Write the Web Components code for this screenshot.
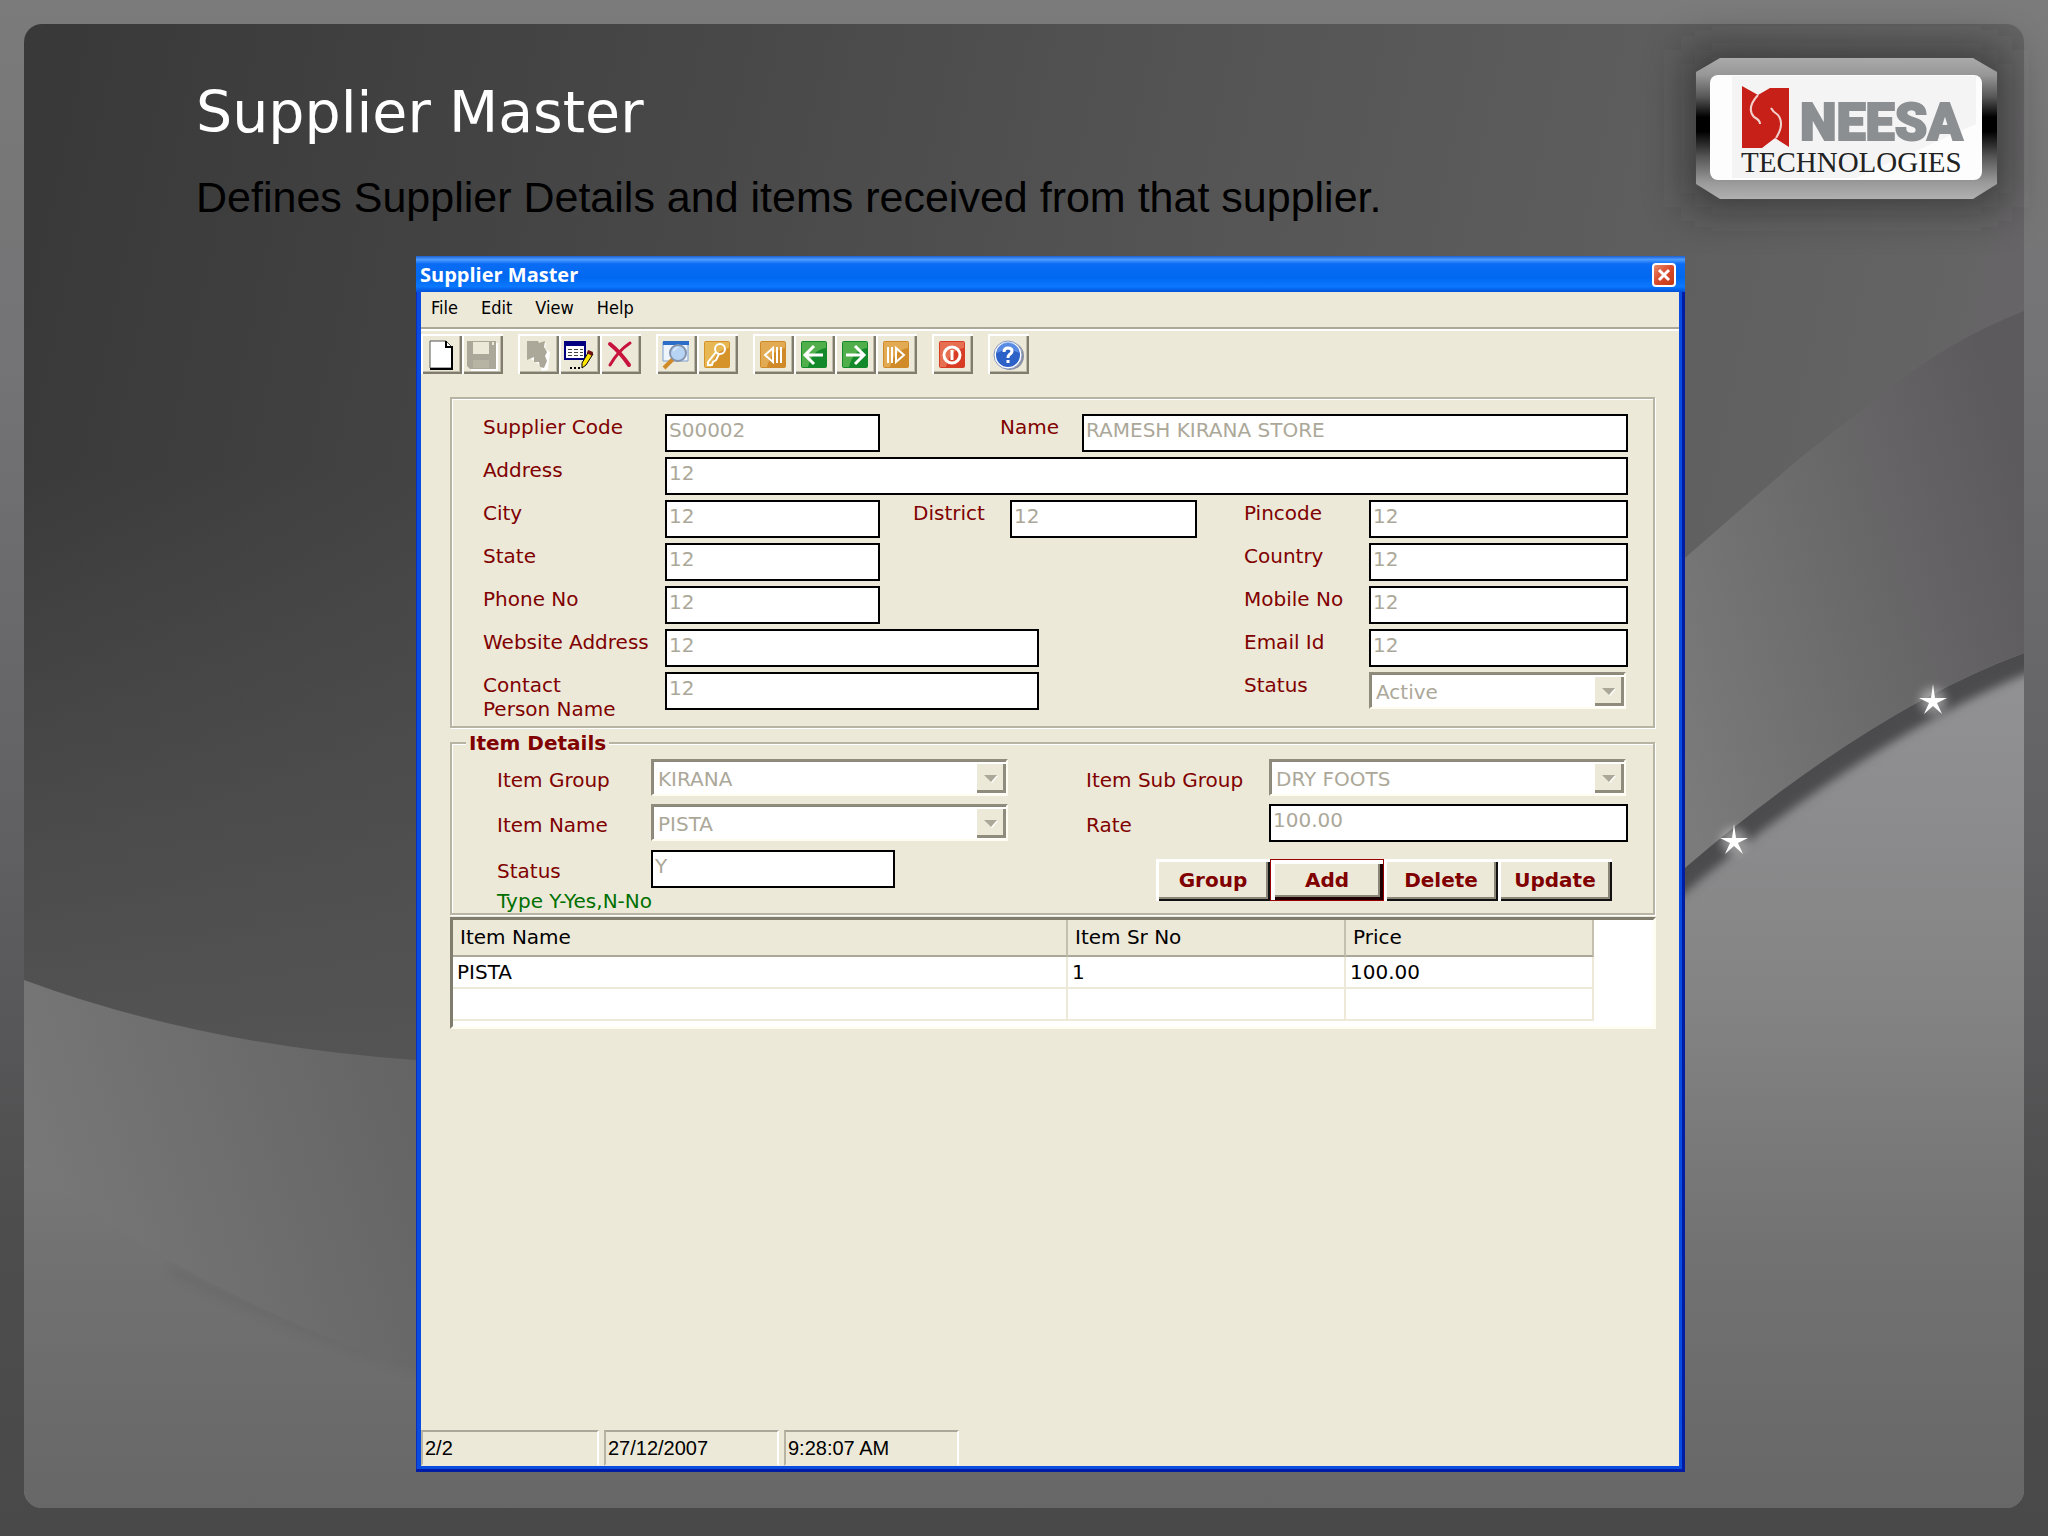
<!DOCTYPE html>
<html lang="en">
<head>
<meta charset="utf-8">
<title>Supplier Master</title>
<style>
  html, body { margin: 0; min-height: 100%; }
  body {
    font-family: "DejaVu Sans", Verdana, sans-serif;
    font-size: 20px;
    line-height: 24px;
  }
  .code, .city { --control: 215px; }
  .name { --label: 82px; margin-left: 120px; flex: 1; }
  .address { flex: 1; }
  .district { --label: 97px; --control: 187px; margin-left: 33px; }
  .wide { --control: 374px; }
  .right { --label: 125px; --control: 259px; margin-left: auto; }
  .item { --label: 154px; --control: 357px; --drop: 9px; }
  .item.short { --control: 244px; }
  .item.end { --label: 183px; --control: 359px; margin-left: auto; }
  select-field.right { --control: 257px; margin-right: 2px; }
  select-field.item.end { --control: 357px; margin-right: 2px; }
  .stack { display: flex; flex-direction: column; gap: 1px; }
  .hint { color: #007000; }
  .actions { display: flex; margin: 9px 16px 0 auto; }
</style>
</head>
<body>
<slide-page>
  <slide-header slot="header" heading="Supplier Master">
    Defines Supplier Details and items received from that supplier.
    <brand-logo slot="logo"></brand-logo>
  </slide-header>

  <xp-window caption="Supplier Master">
    <menu-bar items="File,Edit,View,Help"></menu-bar>
    <tool-bar></tool-bar>

    <group-box class="supplier">
      <form-row>
        <text-field class="code" label="Supplier Code" value="S00002"></text-field>
        <text-field class="name" label="Name" value="RAMESH KIRANA STORE"></text-field>
      </form-row>
      <form-row>
        <text-field class="address" label="Address" value="12"></text-field>
      </form-row>
      <form-row>
        <text-field class="city" label="City" value="12"></text-field>
        <text-field class="district" label="District" value="12"></text-field>
        <text-field class="right" label="Pincode" value="12"></text-field>
      </form-row>
      <form-row>
        <text-field class="city" label="State" value="12"></text-field>
        <text-field class="right" label="Country" value="12"></text-field>
      </form-row>
      <form-row>
        <text-field class="city" label="Phone No" value="12"></text-field>
        <text-field class="right" label="Mobile No" value="12"></text-field>
      </form-row>
      <form-row>
        <text-field class="wide" label="Website Address" value="12"></text-field>
        <text-field class="right" label="Email Id" value="12"></text-field>
      </form-row>
      <form-row>
        <text-field class="wide" label="Contact&#10;Person Name" value="12"></text-field>
        <select-field class="right" label="Status" value="Active"></select-field>
      </form-row>
    </group-box>

    <group-box class="items" caption="Item Details">
      <form-row>
        <select-field class="item" label="Item Group" value="KIRANA"></select-field>
        <select-field class="item end" label="Item Sub Group" value="DRY FOOTS"></select-field>
      </form-row>
      <form-row>
        <select-field class="item" label="Item Name" value="PISTA"></select-field>
        <text-field class="item end" label="Rate" value="100.00"></text-field>
      </form-row>
      <form-row>
        <div class="stack">
          <text-field class="item short" label="Status" value="Y"></text-field>
          <span class="hint">Type Y-Yes,N-No</span>
        </div>
        <div class="actions">
          <push-button>Group</push-button>
          <push-button focused>Add</push-button>
          <push-button>Delete</push-button>
          <push-button>Update</push-button>
        </div>
      </form-row>
    </group-box>

    <item-table></item-table>
    <status-bar slot="status" panels="2/2|27/12/2007|9:28:07 AM"></status-bar>
  </xp-window>
</slide-page>

<script>
// Small base: opens the shadow root and fills it from render().
class BaseElement extends HTMLElement {
  constructor() {
    super();
    this.shadow = this.attachShadow({ mode: "open" });
  }

  connectedCallback() {
    this.shadow.innerHTML = this.render();
  }

  attr(name) {
    return this.getAttribute(name) || "";
  }
}

class SlidePage extends BaseElement {
  render() {
    return `
      <style>
        :host {
          display: flex;
          box-sizing: border-box;
          min-height: 100vh;
          padding: 24px 24px 28px;
          background: linear-gradient(#7b7b7b, #737274 25%, #605f61 55%, #4d4d4e 80%, #49494a);
        }
        main {
          position: relative;
          flex: 1;
          display: flex;
          flex-direction: column;
          min-width: 0;
        }
        .art {
          position: absolute;
          inset: 0;
          width: 100%;
          height: 100%;
          border-radius: 18px;
        }
        .body {
          position: relative;
          flex: 1;
          display: flex;
          padding: 0 339px 36px 392px;
        }
        ::slotted(xp-window) { flex: 1; min-width: 0; }
      </style>
      <main>
        <svg class="art" viewBox="24 24 2000 1484" preserveAspectRatio="none" aria-hidden="true">
          <defs>
            <linearGradient id="top" gradientUnits="userSpaceOnUse" x1="24" y1="200" x2="2024" y2="620">
              <stop offset="0" stop-color="#393939"/>
              <stop offset=".3" stop-color="#474747"/>
              <stop offset=".55" stop-color="#545454"/>
              <stop offset=".85" stop-color="#616161"/>
              <stop offset="1" stop-color="#686668"/>
            </linearGradient>
            <linearGradient id="low" x1="0" y1="0" x2="0" y2="1">
              <stop offset=".3" stop-color="#555" stop-opacity="0"/>
              <stop offset=".7" stop-color="#555" stop-opacity=".95"/>
            </linearGradient>
            <linearGradient id="mid" gradientUnits="userSpaceOnUse" x1="24" y1="1100" x2="2024" y2="480">
              <stop offset="0" stop-color="#777"/>
              <stop offset=".22" stop-color="#606060"/>
              <stop offset=".5" stop-color="#686868"/>
              <stop offset=".8" stop-color="#7b7b7b"/>
              <stop offset="1" stop-color="#5c5a5c"/>
            </linearGradient>
            <linearGradient id="base" gradientUnits="userSpaceOnUse" x1="0" y1="650" x2="0" y2="1508">
              <stop offset="0" stop-color="#939294"/>
              <stop offset=".4" stop-color="#858485"/>
              <stop offset=".7" stop-color="#727272"/>
              <stop offset="1" stop-color="#676768"/>
            </linearGradient>
            <filter id="soft" x="-10%" y="-10%" width="120%" height="120%"><feGaussianBlur stdDeviation="5"/></filter>
            <filter id="halo" x="-100%" y="-100%" width="300%" height="300%"><feGaussianBlur stdDeviation="5"/></filter>
            <clipPath id="under"><path d="M24 1160Q200 1300 415 1369Q1100 1420 1686 867Q1870 710 2024 653V1508H24Z"/></clipPath>
            <g id="star">
              <circle r="13" fill="#fff" opacity=".4" filter="url(#halo)"/>
              <path fill="#fff" d="M0-17L2-3L14-3L4 2L9 13L0 5L-9 13L-4 2L-14-3L-2-3Z"/>
            </g>
          </defs>
          <path fill="url(#top)" d="M24 24H2024V1508H24Z"/>
          <path fill="url(#low)" d="M24 24H420V1508H24Z"/>
          <path fill="url(#mid)" d="M24 980Q200 1045 415 1060C900 1090 1250 930 1686 557L1800 458L1887 390Q1950 340 2024 311V1508H24Z"/>
          <path fill="url(#base)" d="M24 1160Q200 1300 415 1369Q1100 1420 1686 867Q1870 710 2024 653V1508H24Z"/>
          <g clip-path="url(#under)">
            <path fill="none" stroke="#4c4c4d" stroke-width="38" filter="url(#soft)" d="M1660 889Q1868 711 2050 644"/>
            <path fill="none" stroke="#5c5c5c" stroke-width="8" opacity=".3" filter="url(#soft)" d="M170 1270Q300 1332 430 1373"/>
          </g>
          <use href="#star" x="1734" y="841"/>
          <use href="#star" x="1933" y="701"/>
        </svg>
        <slot name="header"></slot>
        <div class="body"><slot></slot></div>
      </main>`;
  }
}

class SlideHeader extends BaseElement {
  render() {
    return `
      <style>
        :host { position: relative; display: flex; height: 232px; }
        .titles { flex: 1; padding: 52px 0 0 172px; }
        h1 { margin: 0; font-size: 57px; line-height: 72px; font-weight: normal; color: #fff; }
        p { margin: 25px 0 0; font: 43px/48px "Liberation Sans", Arial, sans-serif; color: #000; white-space: nowrap; }
        ::slotted(brand-logo) { margin: 34px 27px 0 0; }
      </style>
      <div class="titles">
        <h1>${this.attr("heading")}</h1>
        <p><slot></slot></p>
      </div>
      <slot name="logo"></slot>`;
  }
}

class BrandLogo extends BaseElement {
  render() {
    return `
      <style>
        :host { display: block; width: 301px; height: 141px; }
        svg { display: block; overflow: visible; }
      </style>
      <svg width="301" height="141" viewBox="0 0 301 141" role="img" aria-label="Neesa Technologies">
        <defs>
          <linearGradient id="plate" x1="0" y1="0" x2="0" y2="1">
            <stop offset="0" stop-color="#aaa"/>
            <stop offset=".12" stop-color="#979797"/>
            <stop offset=".28" stop-color="#555"/>
            <stop offset=".42" stop-color="#000"/>
            <stop offset=".52" stop-color="#000"/>
            <stop offset=".7" stop-color="#555"/>
            <stop offset=".88" stop-color="#999"/>
            <stop offset="1" stop-color="#b0b0b0"/>
          </linearGradient>
          <filter id="glow" x="-30%" y="-60%" width="160%" height="220%"><feGaussianBlur stdDeviation="22"/></filter>
        </defs>
        <rect x="-8" y="-8" width="317" height="157" fill="#222" opacity=".6" filter="url(#glow)"/>
        <path fill="url(#plate)" d="M24 0H277L301 14V126L277 141H24L0 126V14Z"/>
        <rect x="14" y="17" width="272" height="105" rx="8" fill="#fdfdfd"/>
        <path fill="#f5f4f4" d="M36 18H280V66L160 120H36Z"/>
        <path fill="#c62018" d="M46 28L62 37L74 30H93V89L79 80L66 90H46Z"/>
        <path fill="none" stroke="#f3d2cd" stroke-width="2" d="M62 37Q50 50 58 59Q64 62 64 66M75 50Q77 54 82 57Q89 66 80 80"/>
        <text x="104" y="82" fill="#8b8f92" stroke="#8b8f92" stroke-width="2" font-family="Roboto, 'Liberation Sans', sans-serif" font-weight="900" font-size="52">NEESA</text>
        <text x="45" y="114" fill="#222" font-family="'Liberation Serif', 'Times New Roman', serif" font-size="29">TECHNOLOGIES</text>
      </svg>`;
  }
}

class XpWindow extends BaseElement {
  render() {
    return `
      <style>
        :host {
          display: flex;
          flex-direction: column;
          box-sizing: border-box;
          padding: 0 6px 6px 5px;
          background: #0a4be0;
          box-shadow: inset -3px -3px 0 #001ca4, inset 1px 0 0 #0a2fc0;
        }
        header {
          display: flex;
          align-items: center;
          justify-content: space-between;
          height: 36px;
          margin: 0 -6px 0 -5px;
          padding: 0 9px 0 4px;
          background: linear-gradient(#1c5fd0, #4c9cff 10%, #0a6cf4 22%, #0068f0 60%, #0a78ff 85%, #0050d8);
          color: #fff;
        }
        h2 { margin: 2px 0 0; font: bold 20px/24px "Open Sans", "Trebuchet MS", sans-serif; }
        button {
          width: 24px;
          height: 24px;
          margin-top: 2px;
          padding: 0;
          border: 2px solid #fff;
          border-radius: 4px;
          background: linear-gradient(135deg, #e98b6a, #d9482a 50%, #c03a14);
        }
        button svg { display: block; }
        section { flex: 1; display: flex; flex-direction: column; background: #ece9d8; }
        ::slotted(.supplier) { margin: 23px 24px 0 29px; }
        ::slotted(.items) { margin: 3px 24px 0 29px; }
        ::slotted(item-table) { margin: 2px 23px 0 29px; }
        ::slotted(status-bar) { margin-top: auto; }
      </style>
      <header>
        <h2>${this.attr("caption")}</h2>
        <button type="button" aria-label="Close">
          <svg width="20" height="20" viewBox="0 0 20 20"><path stroke="#fff" stroke-width="3" d="M5 5L15 15M15 5L5 15"/></svg>
        </button>
      </header>
      <section>
        <slot></slot>
        <slot name="status"></slot>
      </section>`;
  }
}

class MenuBar extends BaseElement {
  render() {
    const items = this.attr("items").split(",").map((item) => `<button type="button">${item}</button>`);
    return `
      <style>
        :host { display: block; border-bottom: 2px solid #aca899; box-shadow: 0 2px 0 #fff; }
        nav { display: flex; gap: 23px; height: 35px; padding-left: 10px; align-items: flex-start; }
        button { margin-top: 4px; padding: 0; border: 0; background: none; color: #000; font: 18px/24px "DejaVu Sans Condensed", Tahoma, sans-serif; }
      </style>
      <nav>${items.join("")}</nav>`;
  }
}

const tile = (from, to, mark) => `
  <rect x="7" y="7" width="26" height="27" rx="2" fill="${to}"/>
  <path fill="${from}" opacity=".6" d="M8 8H32V14Q18 16 14 33H8Z"/>
  <g fill="none" stroke="#fff" stroke-width="3">${mark}</g>`;

const icons = {
  New: `<path fill="#fff" stroke="#555" stroke-width="1" d="M9 7H25L31 13V34H9Z"/>
    <path fill="none" stroke="#000" stroke-width="2" d="M25 7V13H31V35H9"/>`,
  Save: `<path fill="#fff" d="M7 9H36V37H9Z"/><path fill="#aca899" d="M5 7H34V35H8L5 32Z"/>
    <path fill="#ece9d8" d="M11 8H27V20H11Z"/><path fill="#b8b4a4" d="M11 26H27V34H11Z"/><path fill="#ece9d8" d="M30 8H32V11H30Z"/>`,
  Cut: `<path fill="#fff" d="M11 9H28L27 15L32 18L31 26L30 36L24 37L22 31L12 24Z"/>
    <path fill="#aca899" d="M9 7H20L21 9L27 7L26 13L29 18L27 22L29 27L26 34L22 33L21 28H16L16 23L9 26Z"/>`,
  Edit: `<path fill="#fff" stroke="#000080" stroke-width="2" d="M6 8H26V25H6Z"/><path fill="#000080" d="M5 7H27V12H5Z"/>
    <path stroke="#444" stroke-width="1" stroke-dasharray="4 2" d="M9 15.500H24M9 18.500H24M9 21.500H24"/>
    <path fill="#ffe600" stroke="#000" stroke-width="1" d="M30 17L34 20L27 31L23 34V29Z"/><path fill="#701010" d="M29 16L34 18L33 22L28 19Z"/>
    <path fill="#000" d="M11 33H13V35H11ZM15 33H17V35H15ZM19 33H21V35H19Z"/>`,
  Delete: `<path fill="none" stroke="#c8143c" stroke-width="4" stroke-linecap="round" d="M10 10Q20 18 29 31"/>
    <path fill="none" stroke="#c8143c" stroke-width="3" stroke-linecap="round" d="M30 9Q18 17 10 31"/>`,
  Find: `<path fill="#eef4fb" stroke="#7aa0d0" d="M7 8H32V27H7Z"/><path fill="#2a6cc8" d="M7 7H33V11H7Z"/>
    <path stroke="#d08a28" stroke-width="4" d="M17 25L8 34"/><circle cx="22" cy="19" r="8" fill="#b8d4f4" stroke="#8494ac" stroke-width="2"/>
    <path fill="#fff" opacity=".7" d="M17 18A6 6 0 0 1 23 13Q19 15 17 18Z"/>`,
  Key: tile("#f0cf70", "#d6932a", `<circle cx="23" cy="15" r="5" stroke-width="2"/><path stroke-width="2" d="M19 18L11 28V31H15L16 28L19 26L22 20"/>`),
  First: tile("#ecc070", "#d08a28", `<path stroke-width="2" d="M20 14V28L12 21ZM24 13V29M28 13V29"/>`),
  Previous: tile("#7cc860", "#128a2c", `<path d="M12 21H29M20 12L11 21L20 30"/>`),
  Next: tile("#7cc860", "#128a2c", `<path d="M11 21H28M20 12L29 21L20 30"/>`),
  Last: tile("#ecc070", "#d08a28", `<path stroke-width="2" d="M20 14V28L28 21ZM16 13V29M12 13V29"/>`),
  Stop: tile("#f09070", "#d83c24", `<circle cx="20" cy="21" r="8"/><path d="M20 16V26"/>`),
  Help: `<circle cx="22" cy="22" r="14" fill="#8a8fa0"/><circle cx="20" cy="21" r="14" fill="#fff" stroke="#8898c0" stroke-width="1"/>
    <circle cx="20" cy="21" r="12" fill="#2c62c8"/><path fill="#6c9cf0" opacity=".7" d="M9 19A11 11 0 0 1 31 19Q20 12 9 19Z"/>
    <path fill="none" stroke="#fff" stroke-width="3" d="M16 18Q16 14 20 14Q24 14 24 17Q24 19 21 21Q20 22 20 24M20 26V29"/>`
};

class ToolBar extends BaseElement {
  render() {
    const groups = [
      ["New", "Save"],
      ["Cut", "Edit", "Delete"],
      ["Find", "Key"],
      ["First", "Previous", "Next", "Last"],
      ["Stop"],
      ["Help"]
    ];
    const button = (name) => `<button type="button" aria-label="${name}"><svg width="40" height="40" viewBox="0 0 40 40">${icons[name]}</svg></button>`;
    return `
      <style>
        :host { display: flex; gap: 15px; padding-top: 5px; }
        div { display: flex; }
        button {
          width: 41px;
          height: 40px;
          padding: 0;
          border: 0;
          background: #ece9d8;
          box-shadow: inset 2px 2px 0 #fff, inset -2px -2px 0 #807d6e, inset -3px -3px 0 #bdb9a8;
        }
        svg { display: block; }
      </style>
      ${groups.map((group) => `<div>${group.map(button).join("")}</div>`).join("")}`;
  }
}

class GroupBox extends BaseElement {
  render() {
    const caption = this.attr("caption");
    return `
      <style>
        :host { display: block; }
        fieldset {
          margin: 0;
          min-width: 0;
          padding: 15px 25px 5px 31px;
          border: 2px solid #b8b4a4;
          box-shadow: inset 1px 1px 0 #fff, 1px 1px 0 #fff;
        }
        fieldset.titled { padding: 4px 25px 0 45px; }
        legend {
          margin-left: -31px;
          padding: 0 3px;
          background: #ece9d8;
          color: #800000;
          font-weight: bold;
        }
        .rows { display: flex; flex-direction: column; gap: 5px; }
        .titled .rows { gap: 8px; }
      </style>
      <fieldset class="${caption ? "titled" : ""}">
        ${caption ? `<legend>${caption}</legend>` : ""}
        <div class="rows"><slot></slot></div>
      </fieldset>`;
  }
}

class FormRow extends BaseElement {
  render() {
    return `
      <style>:host { display: flex; align-items: flex-start; }</style>
      <slot></slot>`;
  }
}

const fieldStyle = `
  :host { display: flex; align-items: flex-start; }
  label {
    flex: none;
    width: var(--label, 182px);
    padding-top: var(--drop, 1px);
    color: #800000;
    white-space: pre-line;
  }`;

class TextField extends BaseElement {
  render() {
    return `
      <style>
        ${fieldStyle}
        input {
          flex: 1 1 var(--control, auto);
          box-sizing: border-box;
          width: var(--control, 100%);
          min-width: 0;
          height: 38px;
          margin: 0;
          padding: 2px 2px 8px;
          border: 2px solid #000;
          border-radius: 0;
          background: #fff;
          color: #aca899;
          font: inherit;
        }
      </style>
      <label for="field">${this.attr("label")}</label>
      <input id="field" type="text" value="${this.attr("value")}" disabled>`;
  }
}

class SelectField extends BaseElement {
  render() {
    return `
      <style>
        ${fieldStyle}
        .box {
          display: flex;
          box-sizing: border-box;
          width: var(--control);
          height: 37px;
          border: 2px solid;
          border-color: #8f8c7d #fffdf2 #fffdf2 #8f8c7d;
          background: #fff;
          box-shadow: inset 1px 1px 0 #8b887a;
        }
        select {
          flex: 1;
          min-width: 0;
          padding: 4px 5px 2px;
          border: 0;
          appearance: none;
          background: none;
          color: #aca899;
          font: inherit;
          opacity: 1;
        }
        svg { flex: none; margin: 2px 0 1px; background: #ece9d8; box-shadow: inset 1px 1px 0 #fff, inset -3px -3px 0 #8f8c7d; }
      </style>
      <label for="field">${this.attr("label")}</label>
      <div class="box">
        <select id="field" disabled><option>${this.attr("value")}</option></select>
        <svg width="30" height="30" viewBox="0 0 30 30" aria-hidden="true">
          <path fill="#fff" d="M10 13H22L16 20Z"/><path fill="#aca899" d="M8 12H21L15 19Z"/>
        </svg>
      </div>`;
  }
}

class PushButton extends BaseElement {
  render() {
    return `
      <style>
        :host { display: block; }
        button {
          display: block;
          width: 114px;
          height: 42px;
          padding: 0;
          border: 0;
          background: #ece9d8;
          box-shadow: inset 3px 3px 0 #fff, inset -2px -2px 0 #111, inset -4px -4px 0 #8a8778;
          color: #800000;
          font: bold 20px/24px "DejaVu Sans", Verdana, sans-serif;
        }
        :host([focused]) button {
          border: 1px solid #900;
          box-shadow: inset 4px 4px 0 #fff, inset -3px -3px 0 #200000, inset -5px -5px 0 #8a8778;
        }
      </style>
      <button type="button"><slot></slot></button>`;
  }
}

class ItemTable extends BaseElement {
  render() {
    return `
      <style>
        :host {
          display: block;
          padding-bottom: 5px;
          border: 3px solid;
          border-color: #807d6e #fffdf2 #fffdf2 #807d6e;
          background: #fff;
        }
        table { width: calc(100% - 59px); border-collapse: separate; border-spacing: 0; table-layout: fixed; }
        .number { width: 278px; }
        .price { width: 248px; }
        th, td { box-sizing: border-box; padding: 0 4px; text-align: left; font-weight: normal; color: #000; }
        th { height: 37px; padding: 0 7px 2px; border-right: 2px solid #c4c0b0; border-bottom: 2px solid #aca899; background: #ece9d8; }
        td { height: 32px; border-right: 2px solid #ece9d8; border-bottom: 2px solid #ece9d8; }
      </style>
      <table>
        <thead>
          <tr><th>Item Name</th><th class="number">Item Sr No</th><th class="price">Price</th></tr>
        </thead>
        <tbody>
          <tr><td>PISTA</td><td>1</td><td>100.00</td></tr>
          <tr><td></td><td></td><td></td></tr>
        </tbody>
      </table>`;
  }
}

class StatusBar extends BaseElement {
  render() {
    const panels = this.attr("panels").split("|").map((text) => `<span>${text}</span>`);
    return `
      <style>
        :host { display: flex; gap: 5px; font: 20px/24px "Liberation Sans", Arial, sans-serif; color: #000; }
        span {
          box-sizing: border-box;
          width: 175px;
          height: 36px;
          padding: 4px 2px 0;
          border: 2px solid;
          border-color: #aca899 #fff #ece9d8 #b8b4a4;
        }
        span:first-of-type { width: 178px; }
      </style>
      ${panels.join("")}`;
  }
}

customElements.define("slide-page", SlidePage);
customElements.define("slide-header", SlideHeader);
customElements.define("brand-logo", BrandLogo);
customElements.define("xp-window", XpWindow);
customElements.define("menu-bar", MenuBar);
customElements.define("tool-bar", ToolBar);
customElements.define("group-box", GroupBox);
customElements.define("form-row", FormRow);
customElements.define("text-field", TextField);
customElements.define("select-field", SelectField);
customElements.define("push-button", PushButton);
customElements.define("item-table", ItemTable);
customElements.define("status-bar", StatusBar);
</script>
</body>
</html>
